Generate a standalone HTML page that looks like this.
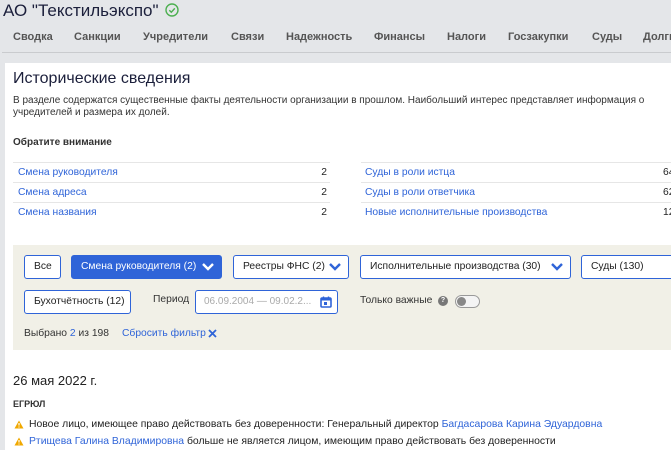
<!DOCTYPE html>
<html><head><meta charset="utf-8"><style>
*{margin:0;padding:0;box-sizing:border-box}
html,body{width:671px;height:450px;overflow:hidden}
body{background:#e4e6e9;font-family:"Liberation Sans",sans-serif;color:#222;position:relative}
.a{position:absolute;white-space:nowrap}
.tab{position:absolute;top:31px;font-size:11px;font-weight:bold;color:#555}
.card{position:absolute;left:5px;top:63px;width:700px;height:400px;background:#fff}
.lk{color:#2f64d8}
.row{position:absolute;height:20px;border-top:1px solid #e6e6e6;font-size:10.3px;line-height:20px}
.btn{position:absolute;height:24px;border:1px solid #2f64d8;border-radius:3px;background:#fff;font-size:10.3px;line-height:22px;padding-left:9px;color:#222}
.chev{position:absolute;right:6px;top:6px}
</style></head><body>
<div class="a" style="left:3px;top:1px;font-size:17px;color:#1b1f3b">АО "Текстильэкспо"</div>
<svg class="a" style="left:165px;top:3px" width="14" height="14" viewBox="0 0 14 14"><circle cx="7" cy="7" r="6" fill="none" stroke="#4caf50" stroke-width="1.4"/><path d="M4.3 7.2l2 2 3.5-3.8" fill="none" stroke="#4caf50" stroke-width="1.4"/></svg>
<div class="tab" style="left:13px">Сводка</div>
<div class="tab" style="left:74px">Санкции</div>
<div class="tab" style="left:143px">Учредители</div>
<div class="tab" style="left:231px">Связи</div>
<div class="tab" style="left:286px">Надежность</div>
<div class="tab" style="left:374px">Финансы</div>
<div class="tab" style="left:447px">Налоги</div>
<div class="tab" style="left:508px">Госзакупки</div>
<div class="tab" style="left:592px">Суды</div>
<div class="tab" style="left:643px">Долги</div>
<div class="a" style="left:2px;top:52px;width:680px;height:1px;background:#c9cbce"></div>
<div class="card"></div>
<div class="a" style="left:13px;top:70px;font-size:16px;color:#1b1f3b">Исторические сведения</div>
<div class="a" style="left:13px;top:95px;font-size:10px;line-height:12px;color:#333">В разделе содержатся существенные факты деятельности организации в прошлом. Наибольший интерес представляет информация о<br>учредителей и размера их долей.</div>
<div class="a" style="left:13px;top:137px;font-size:10px;font-weight:bold;color:#333">Обратите внимание</div>
<div class="row" style="left:13px;top:162px;width:317px"><span class="lk" style="margin-left:5px">Смена руководителя</span><span style="position:absolute;right:3px">2</span></div>
<div class="row" style="left:13px;top:182px;width:317px"><span class="lk" style="margin-left:5px">Смена адреса</span><span style="position:absolute;right:3px">2</span></div>
<div class="row" style="left:13px;top:202px;width:317px"><span class="lk" style="margin-left:5px">Смена названия</span><span style="position:absolute;right:3px">2</span></div>
<div class="row" style="left:361px;top:162px;width:320px"><span class="lk" style="margin-left:4px">Суды в роли истца</span><span style="position:absolute;left:302px">64</span></div>
<div class="row" style="left:361px;top:182px;width:320px"><span class="lk" style="margin-left:4px">Суды в роли ответчика</span><span style="position:absolute;left:302px">62</span></div>
<div class="row" style="left:361px;top:202px;width:320px"><span class="lk" style="margin-left:4px">Новые исполнительные производства</span><span style="position:absolute;left:302px">12</span></div>
<div class="a" style="left:13px;top:245px;width:670px;height:105px;background:#f1f0e7"></div>
<div class="btn" style="left:24px;top:255px;width:37px">Все</div>
<div class="btn" style="left:71px;top:255px;width:151px;background:#2f64d8;color:#fff">Смена руководителя (2)<svg class="chev" width="14" height="10" viewBox="0 0 14 10"><path d="M2 2l5 5 5-5" fill="none" stroke="#fff" stroke-width="2.4"/></svg></div>
<div class="btn" style="left:233px;top:255px;width:116px">Реестры ФНС (2)<svg class="chev" width="14" height="10" viewBox="0 0 14 10"><path d="M2 2l5 5 5-5" fill="none" stroke="#2f64d8" stroke-width="2.4"/></svg></div>
<div class="btn" style="left:360px;top:255px;width:211px">Исполнительные производства (30)<svg class="chev" width="14" height="10" viewBox="0 0 14 10"><path d="M2 2l5 5 5-5" fill="none" stroke="#2f64d8" stroke-width="2.4"/></svg></div>
<div class="btn" style="left:581px;top:255px;width:120px">Суды (130)</div>
<div class="btn" style="left:24px;top:290px;width:107px">Бухотчётность (12)</div>
<div class="a" style="left:153px;top:294px;font-size:10.3px;color:#333">Период</div>
<div class="a" style="left:195px;top:290px;width:143px;height:24px;border:1px solid #2f64d8;border-radius:3px;background:#fff;font-size:10px;line-height:22px;padding-left:8px;color:#aaa">06.09.2004 — 09.02.2...<svg style="position:absolute;right:5px;top:5px" width="12" height="12" viewBox="0 0 12 12"><rect x="1" y="2" width="10" height="9" rx="1" fill="none" stroke="#2f64d8" stroke-width="1.6"/><rect x="1" y="2" width="10" height="2.5" fill="#2f64d8"/><rect x="4" y="6" width="3" height="3" fill="#2f64d8"/><path d="M3.5 0.5v2M8.5 0.5v2" stroke="#2f64d8" stroke-width="1.4"/></svg></div>
<div class="a" style="left:360px;top:295px;font-size:10.3px;color:#333">Только важные</div>
<div class="a" style="left:438px;top:296px;width:10px;height:10px;border-radius:50%;background:#777;color:#fff;font-size:7px;font-weight:bold;text-align:center;line-height:10px">?</div>
<div class="a" style="left:455px;top:295px;width:25px;height:13px;border:1px solid #999;border-radius:7px;background:#f4f4f4"><div style="position:absolute;left:1px;top:1px;width:9px;height:9px;border-radius:50%;background:#888"></div></div>
<div class="a" style="left:24px;top:328px;font-size:10.3px;color:#333">Выбрано <span class="lk">2</span> из 198</div>
<div class="a lk" style="left:122px;top:328px;font-size:10.3px">Сбросить фильтр</div>
<svg class="a" style="left:208px;top:329px" width="9" height="9" viewBox="0 0 9 9"><path d="M1 1l7 7M8 1l-7 7" stroke="#2f64d8" stroke-width="1.8"/></svg>
<div class="a" style="left:13px;top:373px;font-size:13px;font-weight:normal;color:#222">26 мая 2022 г.</div>
<div class="a" style="left:13px;top:399px;font-size:9px;font-weight:bold;color:#333">ЕГРЮЛ</div>
<svg class="a" style="left:14px;top:420px" width="10" height="9" viewBox="0 0 10 9"><path d="M5 0.5L9.5 8.5H0.5Z" fill="#f0a800"/><path d="M5 3v2.5" stroke="#fff" stroke-width="1.2"/><circle cx="5" cy="7" r="0.6" fill="#fff"/></svg>
<div class="a" style="left:29px;top:419px;font-size:10.4px;color:#222">Новое лицо, имеющее право действовать без доверенности: Генеральный директор <span class="lk">Багдасарова Карина Эдуардовна</span></div>
<svg class="a" style="left:14px;top:437px" width="10" height="9" viewBox="0 0 10 9"><path d="M5 0.5L9.5 8.5H0.5Z" fill="#f0a800"/><path d="M5 3v2.5" stroke="#fff" stroke-width="1.2"/><circle cx="5" cy="7" r="0.6" fill="#fff"/></svg>
<div class="a" style="left:29px;top:436px;font-size:10.4px;color:#222"><span class="lk">Ртищева Галина Владимировна</span> больше не является лицом, имеющим право действовать без доверенности</div>
</body></html>
